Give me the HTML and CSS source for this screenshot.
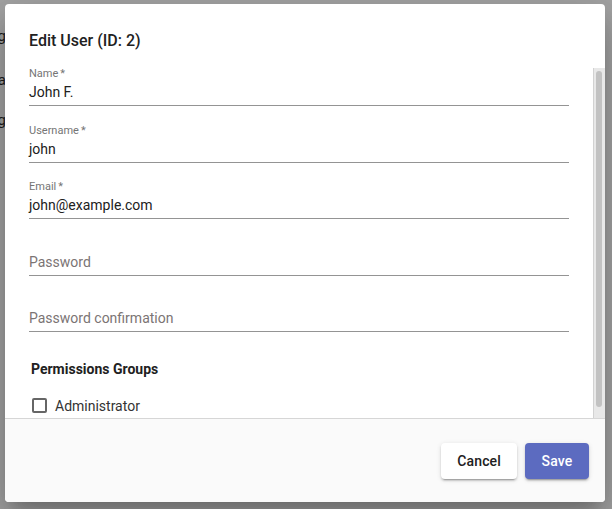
FILE: index.html
```html
<!DOCTYPE html>
<html>
<head>
<meta charset="utf-8">
<link rel="stylesheet" href="styles.css">
</head>
<body>
<div class="backdrop">
  <div class="edge-text">
    <div class="edge-line l1">Billing</div>
    <div class="edge-line l2">Data</div>
    <div class="edge-line l3">Logging</div>
  </div>
</div>
<div class="dialog">
  <h2 class="title">Edit User (ID: 2)</h2>
  <div class="scroll-area">
    <div class="content">
      <div class="field">
        <div class="label">Name<span class="req">*</span></div>
        <div class="value">John F.</div>
      </div>
      <div class="field">
        <div class="label">Username<span class="req">*</span></div>
        <div class="value">john</div>
      </div>
      <div class="field">
        <div class="label">Email<span class="req">*</span></div>
        <div class="value">john@example.com</div>
      </div>
      <div class="field">
        <div class="label"></div>
        <div class="value placeholder">Password</div>
      </div>
      <div class="field">
        <div class="label"></div>
        <div class="value placeholder">Password confirmation</div>
      </div>
      <h3 class="section">Permissions Groups</h3>
      <label class="check"><span class="box"></span><span>Administrator</span></label>
    </div>
    <div class="scrollbar"><div class="thumb"></div></div>
  </div>
  <div class="footer">
    <button class="btn">Cancel</button>
    <button class="btn primary">Save</button>
  </div>
</div>
</body>
</html>
```
FILE: styles.css
```css
html, body {
  margin: 0;
  padding: 0;
}
body {
  width: 612px;
  height: 509px;
  background: #a4a4a4;
  font-family: Roboto, "Liberation Sans", sans-serif;
  position: relative;
  overflow: hidden;
}
.backdrop {
  position: absolute;
  inset: 0;
}
.edge-text {
  position: absolute;
  left: 0;
  top: 0;
  width: 6px;
  overflow: hidden;
  direction: rtl;
  white-space: nowrap;
  color: #1c1c1c;
  font-size: 15px;
  line-height: 20px;
}
.edge-line.l1 { margin-top: 26px; }
.edge-line.l2 { margin-top: 24px; }
.edge-line.l3 { margin-top: 20px; }

.dialog {
  position: absolute;
  left: 5px;
  top: 4px;
  width: 600px;
  height: 498px;
  background: #fff;
  border-radius: 4px;
  overflow: hidden;
  display: flex;
  flex-direction: column;
  box-shadow: 0 11px 15px -7px rgba(0,0,0,.2), 0 24px 38px 3px rgba(0,0,0,.14), 0 9px 46px 8px rgba(0,0,0,.12);
}
.title {
  margin: 0;
  height: 64px;
  box-sizing: border-box;
  padding: 25px 24px 0;
  font-size: 16px;
  line-height: 24px;
  font-weight: 500;
  color: #212121;
  flex: none;
}
.scroll-area {
  flex: 1;
  min-height: 0;
  display: flex;
  overflow: hidden;
}
.content {
  flex: 1;
  min-width: 0;
  padding: 0 24px;
  display: flex;
  flex-direction: column;
}
.scrollbar {
  flex: none;
  width: 12px;
  box-sizing: border-box;
  background: #e8e8e8;
  border-left: 1px solid #d2d2d2;
  padding: 3px 3px 11px 2px;
  display: flex;
}
.thumb {
  flex: 1;
  background: #c2c2c2;
  border-radius: 3px;
}
.field {
  display: flex;
  flex-direction: column;
  flex: none;
  margin-bottom: 18.5px;
}
.label {
  height: 11px;
  font-size: 11px;
  line-height: 11px;
  color: #757575;
  margin-bottom: 3px;
}
.req {
  margin-left: 2px;
}
.value {
  font-size: 14px;
  line-height: 20px;
  color: #212121;
  padding-bottom: 3px;
  border-bottom: 1px solid #949494;
}
.value.placeholder {
  color: #7b7474;
}
.section {
  margin: 8.5px 0 0 2px;
  font-size: 14px;
  line-height: 20px;
  font-weight: 700;
  color: #212121;
  flex: none;
}
.check {
  display: flex;
  align-items: center;
  gap: 8px;
  margin: 16.5px 0 0 3px;
  font-size: 14px;
  line-height: 20px;
  color: #333;
  flex: none;
}
.box {
  width: 15px;
  height: 15px;
  box-sizing: border-box;
  border: 2px solid #666;
  border-radius: 2px;
  flex: none;
}
.footer {
  flex: none;
  height: 84px;
  box-sizing: border-box;
  border-top: 1px solid #d6d6d6;
  background: #fafafa;
  display: flex;
  justify-content: flex-end;
  align-items: flex-start;
  gap: 8px;
  padding: 24px 16px 0 0;
}
.btn {
  height: 36px;
  min-width: 64px;
  padding: 0 16px;
  border: none;
  border-radius: 4px;
  background: #fff;
  color: #212121;
  font-family: Roboto, "Liberation Sans", sans-serif;
  font-size: 14px;
  font-weight: 500;
  letter-spacing: 0.15px;
  box-shadow: 0 3px 1px -2px rgba(0,0,0,.2), 0 2px 2px 0 rgba(0,0,0,.14), 0 1px 5px 0 rgba(0,0,0,.12);
}
.btn.primary {
  background: #5c6bc0;
  color: #fff;
}
```
